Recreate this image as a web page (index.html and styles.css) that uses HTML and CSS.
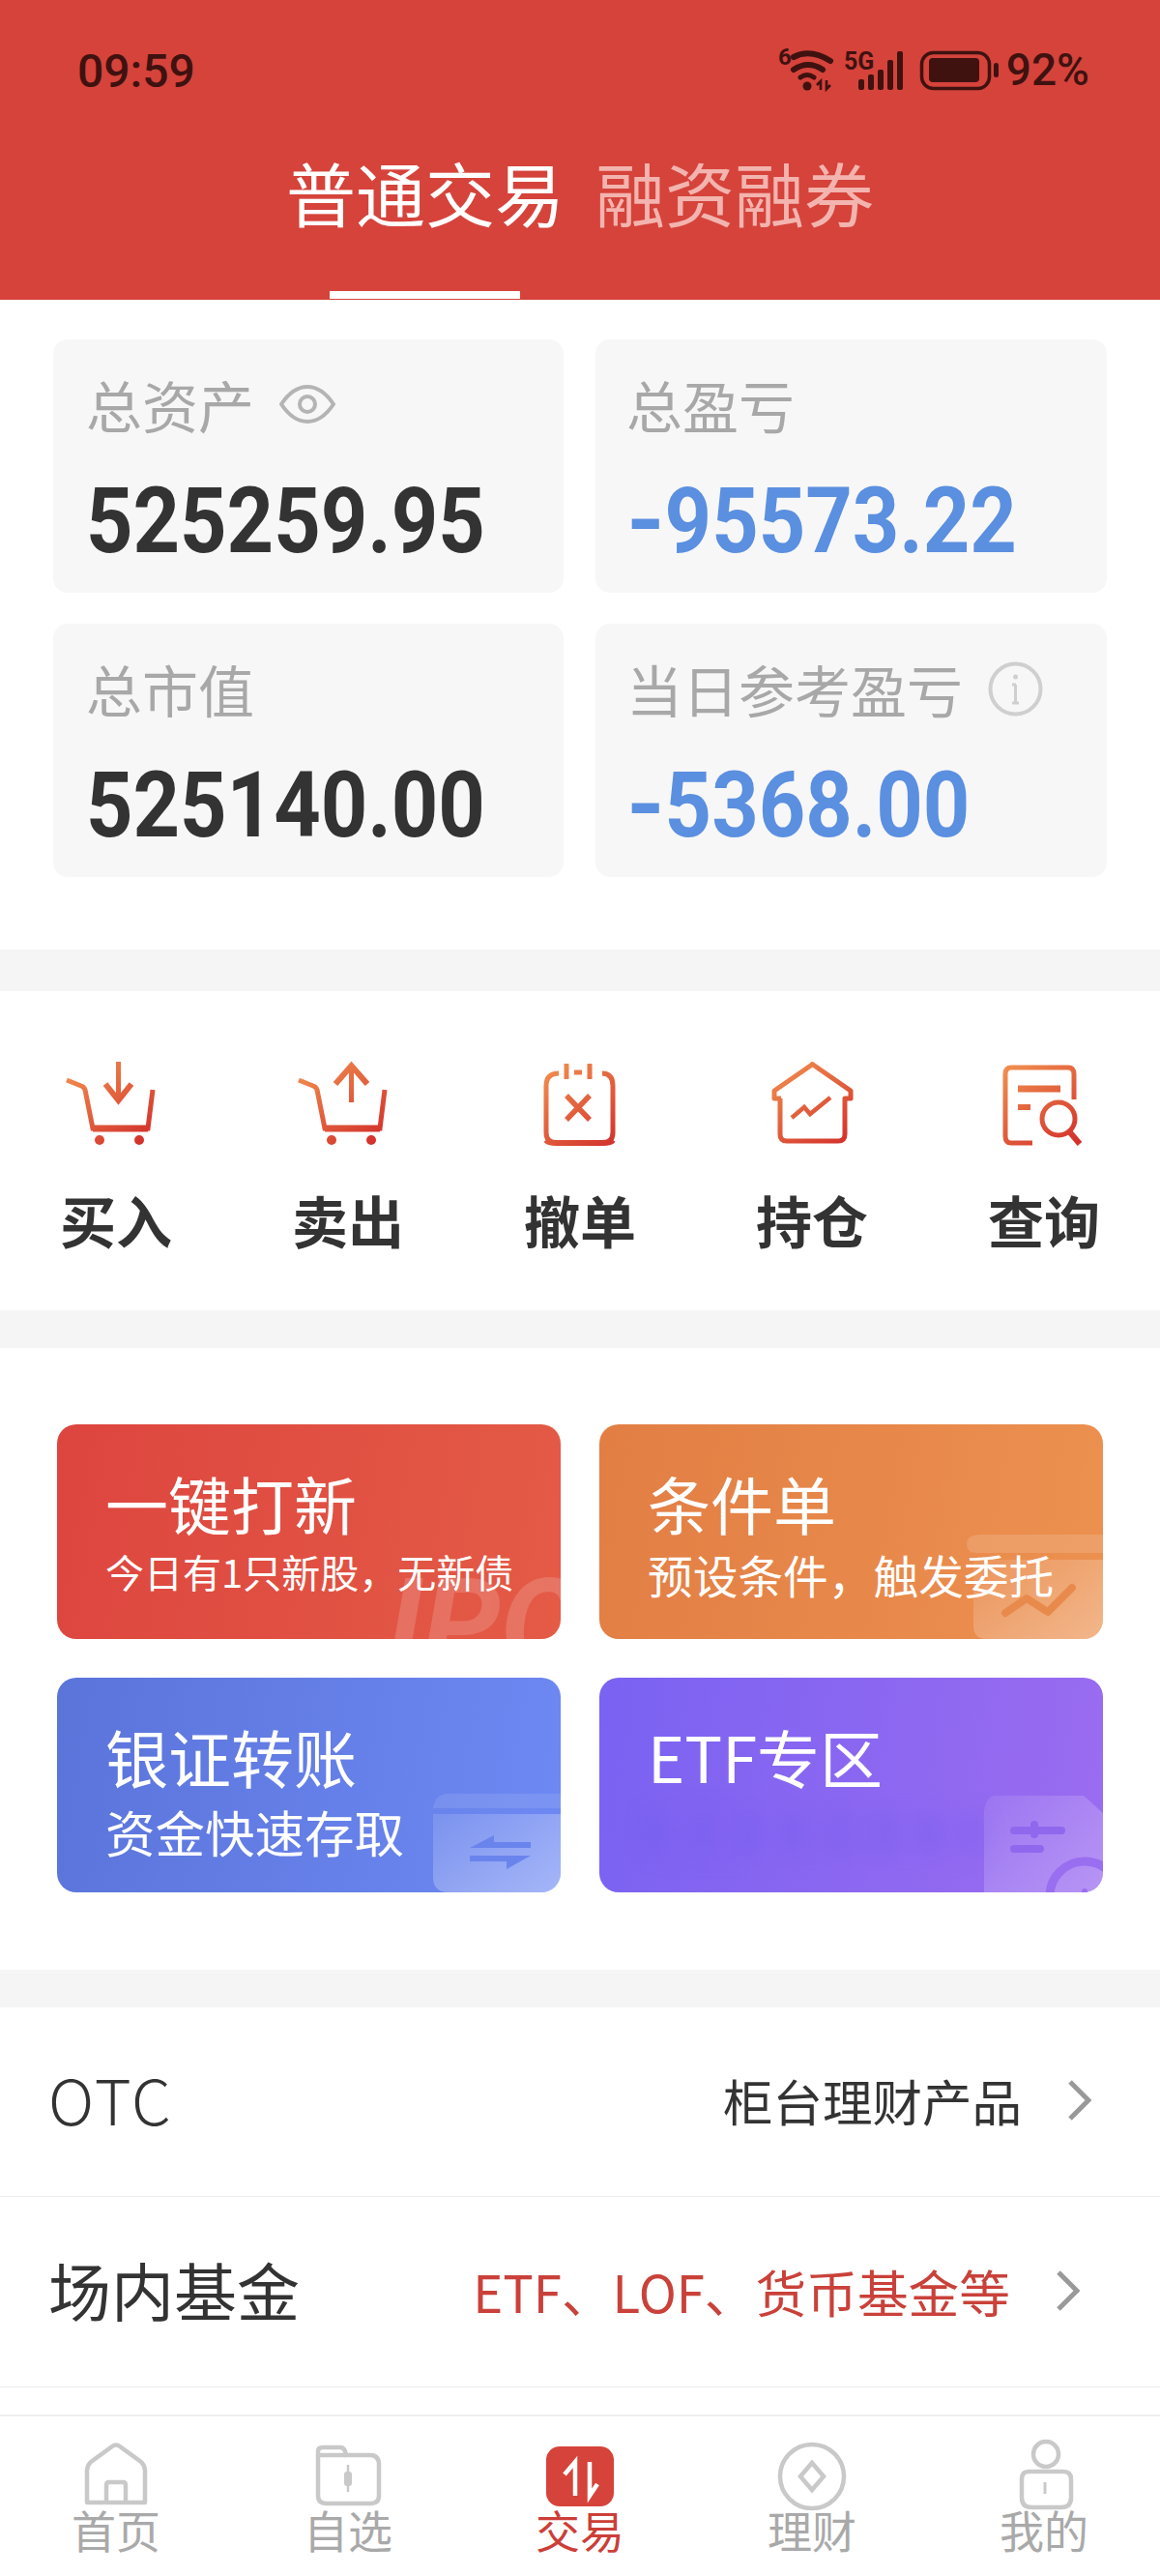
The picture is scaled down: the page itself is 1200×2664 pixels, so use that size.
FILE: index.html
```html
<!DOCTYPE html>
<html lang="zh-CN">
<head>
<meta charset="utf-8">
<title>交易</title>
<link rel="stylesheet" href="styles.css">
</head>
<body>
<div class="page">
  <header class="header">
    <div class="status">
      <span class="time">09:59</span>
      <div class="status-right">
        <svg class="status-icons" width="260" height="80" viewBox="0 0 260 80">
          <text class="st-small" x="27" y="37">6</text>
          <g fill="none" stroke="#3f1210" stroke-linecap="round">
            <path d="M43 29 Q60 20 81 33" stroke-width="6"/>
            <path d="M43 42 Q58 32 73 42" stroke-width="6"/>
            <path d="M50 50 Q57 45 64 50" stroke-width="5"/>
          </g>
          <circle cx="57" cy="59" r="4.500" fill="#3f1210"/>
          <path d="M71 63V54L67 58M77 53V62L81 58" fill="none" stroke="#3f1210" stroke-width="2.600"/>
          <text class="st-five" x="95" y="41.500">5G</text>
          <g fill="#3f1210">
            <rect x="110" y="52" width="6" height="11" rx="2"/>
            <rect x="120" y="47" width="6" height="16" rx="2"/>
            <rect x="130" y="42" width="6" height="21" rx="2"/>
            <rect x="140" y="32" width="6" height="31" rx="2"/>
            <rect x="150" y="23" width="6" height="40" rx="2"/>
          </g>
          <rect x="175.500" y="24.500" width="70" height="37" rx="12" fill="none" stroke="#3f1210" stroke-width="3.500"/>
          <rect x="183" y="30" width="52" height="25" rx="4" fill="#3f1210"/>
          <rect x="250" y="35" width="5" height="15" rx="2.500" fill="#3f1210"/>
        </svg>
        <span class="battery">92%</span>
      </div>
    </div>
    <nav class="top-tabs">
      <div class="top-tab top-tab-on"><span>普通交易</span><i class="top-line"></i></div>
      <div class="top-tab"><span>融资融券</span></div>
    </nav>
  </header>

  <section class="assets">
    <div class="asset">
      <div class="asset-label">总资产
        <svg width="58" height="40" viewBox="0 0 58 40" fill="none" stroke="#b4b4b4" stroke-width="4"><path d="M2 20 Q14 2 29 2 Q44 2 56 20 Q44 38 29 38 Q14 38 2 20Z"/><circle cx="29" cy="20" r="8"/></svg>
      </div>
      <div class="asset-num"><span>525259.95</span></div>
    </div>
    <div class="asset">
      <div class="asset-label">总盈亏</div>
      <div class="asset-num asset-blue"><span><b class="neg">-</b>95573.22</span></div>
    </div>
    <div class="asset">
      <div class="asset-label">总市值</div>
      <div class="asset-num"><span>525140.00</span></div>
    </div>
    <div class="asset">
      <div class="asset-label">当日参考盈亏
        <svg width="57" height="57" viewBox="0 0 57 57" fill="none" stroke="#cfcfcf" stroke-width="4"><circle cx="28.500" cy="28.500" r="26"/><path d="M28.500 24V43M25 24H29M25 43H32" stroke-width="3"/><circle cx="28.500" cy="16" r="2.500" fill="#cfcfcf" stroke="none"/></svg>
      </div>
      <div class="asset-num asset-blue"><span><b class="neg">-</b>5368.00</span></div>
    </div>
  </section>

  <div class="gap gap-a"></div>

  <section class="actions">
    <div class="action">
      <svg width="100" height="96" viewBox="6 0 100 96" fill="none" stroke="url(#ig)" stroke-width="5">
        <defs><linearGradient id="ig" gradientUnits="userSpaceOnUse" x1="5" y1="5" x2="70" y2="95"><stop offset="0" stop-color="#f29350"/><stop offset="1" stop-color="#d3322c"/></linearGradient></defs>
        <path d="M5 22 L20 28 Q23 29 24 32 L32 72 H89 L94 32"/>
        <path d="M32 72H89" stroke-width="7"/>
        <path d="M58.500 3V40"/>
        <path d="M45 26 L58.500 43 L72 26" stroke-width="6"/>
        <circle cx="39" cy="84" r="5" fill="url(#ig)" stroke="none"/>
        <circle cx="80" cy="84" r="5" fill="url(#ig)" stroke="none"/>
      </svg>
      <span>买入</span>
    </div>
    <div class="action">
      <svg width="100" height="96" viewBox="6 0 100 96" fill="none" stroke="url(#ig)" stroke-width="5">
        <path d="M5 22 L20 28 Q23 29 24 32 L32 72 H89 L94 32"/>
        <path d="M32 72H89" stroke-width="7"/>
        <path d="M59.500 8V45"/>
        <path d="M43 26 L59.500 7 L76 26" stroke-width="6"/>
        <circle cx="39" cy="84" r="5" fill="url(#ig)" stroke="none"/>
        <circle cx="80" cy="84" r="5" fill="url(#ig)" stroke="none"/>
      </svg>
      <span>卖出</span>
    </div>
    <div class="action">
      <svg width="100" height="96" viewBox="-7 0 100 96" fill="none" stroke="url(#ig)" stroke-width="5">
        <path d="M21 15 Q8 15 8 28 V76 Q8 87 19 87 H66 Q77 87 77 76 V28 Q77 15 66 15"/>
        <path d="M8 84 Q10 87 19 87 H66 Q75 87 77 84" stroke-width="6"/>
        <path d="M29 5V21M53 5V21M37 14H45"/>
        <path d="M29 38 L53 63M53 38 L29 63" stroke-width="5.500"/>
      </svg>
      <span>撤单</span>
    </div>
    <div class="action">
      <svg width="100" height="96" viewBox="-3 0 100 96" fill="none" stroke="url(#ig)" stroke-width="5">
        <path d="M15 41 H8 V33 L47 6 Q47 5 48 6 L87 33 V41 H81 V78 Q81 85 74 85 H21 Q14 85 14 78 V41" stroke-linejoin="round"/>
        <path d="M26 61 L39 50 L45 57 L66 40" stroke-width="4.500"/>
      </svg>
      <span>持仓</span>
    </div>
    <div class="action">
      <svg width="100" height="96" viewBox="-2 0 100 96" fill="none" stroke="url(#ig)" stroke-width="5">
        <path d="M36 87 H14 Q8 87 8 80 V16 Q8 9 14 9 H73 Q79 9 79 16 V42"/>
        <path d="M21 31H65" stroke-width="7"/>
        <path d="M21 50H34" stroke-width="6"/>
        <circle cx="63" cy="62" r="17"/>
        <path d="M74 75 L85 88" stroke-width="6"/>
      </svg>
      <span>查询</span>
    </div>
  </section>

  <div class="gap gap-b"></div>

  <section class="promos">
    <div class="promo promo-red">
      <div class="promo-title">一键打新</div>
      <div class="promo-sub sub-s">今日有1只新股&#xFF0C;无新债</div>
      <span class="ipo">IPO</span>
    </div>
    <div class="promo promo-orange">
      <div class="promo-title">条件单</div>
      <div class="promo-sub sub-m">预设条件&#xFF0C;触发委托</div>
      <svg class="deco" width="141" height="108" viewBox="0 0 141 108">
        <path d="M14 0H141V19H10Q0 19 0 10 Q0 0 14 0Z" fill="#fff" fill-opacity=".14"/>
        <path d="M7 26H141V108H21Q7 108 7 94Z" fill="url(#dg1)"/>
        <defs><linearGradient id="dg1" x1="0" y1="0" x2="1" y2="1"><stop offset="0" stop-color="#fff" stop-opacity=".08"/><stop offset="1" stop-color="#fff" stop-opacity=".34"/></linearGradient></defs>
        <path d="M40 81 L62 66 L84 80 L109 55" fill="none" stroke="#e98a4d" stroke-width="8" stroke-linecap="round" stroke-linejoin="round"/>
      </svg>
    </div>
    <div class="promo promo-blue">
      <div class="promo-title">银证转账</div>
      <div class="promo-sub sub-l">资金快速存取</div>
      <svg class="deco" width="132" height="102" viewBox="0 0 132 102">
        <path d="M16 0H132V15H0Q2 0 16 0Z" fill="#fff" fill-opacity=".1"/>
        <path d="M0 21H132V102H16Q0 102 0 86Z" fill="url(#dg2)"/>
        <defs><linearGradient id="dg2" x1="0" y1="0" x2="1" y2="1"><stop offset="0" stop-color="#fff" stop-opacity=".12"/><stop offset="1" stop-color="#fff" stop-opacity=".38"/></linearGradient></defs>
        <path d="M38 56 L63 43 V50 H101 V56Z M38 64 H101 L76 78 V70 H38Z" fill="#6a84ed"/>
      </svg>
    </div>
    <div class="promo promo-purple">
      <div class="promo-title">ETF专区</div>
      <div class="promo-blur"></div>
      <svg class="deco" width="125" height="100" viewBox="0 0 125 100">
        <path d="M14 0H105L125 18V100H2V30Q0 0 14 0Z" fill="url(#dg3)"/>
        <defs><linearGradient id="dg3" x1="0" y1="0" x2="1" y2="1"><stop offset="0" stop-color="#fff" stop-opacity=".08"/><stop offset="1" stop-color="#fff" stop-opacity=".28"/></linearGradient></defs>
        <path d="M33 36H82M54 30V40M33 55H60" fill="none" stroke="#9068ee" stroke-width="8" stroke-linecap="round"/>
        <circle cx="106" cy="104" r="36" fill="none" stroke="#9a6ef0" stroke-width="9"/>
        <circle cx="106" cy="99" r="3" fill="#9a6ef0"/>
      </svg>
    </div>
  </section>

  <div class="gap gap-b"></div>

  <section class="rows">
    <div class="row">
      <span class="row-name row-latin">OTC</span>
      <span class="row-note">柜台理财产品</span>
      <svg class="chev" width="25" height="42" viewBox="0 0 25 42" fill="none" stroke="#999" stroke-width="5"><path d="M3 2 L22 21 L3 40"/></svg>
    </div>
    <div class="row row-red">
      <span class="row-name">场内基金</span>
      <span class="row-note">ETF、LOF、货币基金等</span>
      <svg class="chev" width="25" height="42" viewBox="0 0 25 42" fill="none" stroke="#999" stroke-width="5"><path d="M3 2 L22 21 L3 40"/></svg>
    </div>
    <div class="row-cut"></div>
  </section>

  <nav class="tabbar">
    <div class="tab">
      <svg width="80" height="76" viewBox="0 0 80 76" fill="none" stroke="#c9c9c9" stroke-width="4.500">
        <path d="M10 65 V32 Q10 27 14 23 L36 7 Q40 4 44 7 L66 23 Q70 27 70 32 V65Z" stroke-linejoin="round"/>
        <path d="M30 65 V47 Q30 44 33 44 H47 Q50 44 50 47 V65"/>
      </svg>
      <span>首页</span>
    </div>
    <div class="tab">
      <svg width="80" height="76" viewBox="0 0 80 76" fill="none" stroke="#c9c9c9" stroke-width="4.500">
        <path d="M9 12 Q9 8 14 8 H32 Q37 8 38 16 H63 Q72 16 72 26 V58 Q72 66 63 66 H18 Q9 66 9 58Z"/>
        <path d="M9 16H38"/>
        <path d="M40 26V54" stroke-width="2.500"/>
        <rect x="36" y="33" width="8" height="15" rx="3" fill="#c9c9c9" stroke="none"/>
      </svg>
      <span>自选</span>
    </div>
    <div class="tab tab-on">
      <svg width="80" height="76" viewBox="0 0 80 76">
        <rect x="5" y="7" width="70" height="62" rx="14" fill="#d5433b"/>
        <path d="M35 58V23 L24 36M50 23V58 L58 46" fill="none" stroke="#fff" stroke-width="4.500"/>
      </svg>
      <span>交易</span>
    </div>
    <div class="tab">
      <svg width="80" height="76" viewBox="0 0 80 76" fill="none" stroke="#c9c9c9" stroke-width="4.500">
        <circle cx="40" cy="38" r="33"/>
        <path d="M40 24 L52 38 L40 52 L28 38Z"/>
      </svg>
      <span>理财</span>
    </div>
    <div class="tab">
      <svg width="80" height="76" viewBox="0 0 80 76" fill="none" stroke="#c9c9c9" stroke-width="4.500">
        <circle cx="42" cy="15" r="13"/>
        <path d="M24 33 H60 Q68 33 68 41 V60 Q68 70 58 70 H27 Q17 70 17 60 V41 Q17 33 24 33Z"/>
        <path d="M41 44V56" stroke-width="3"/>
      </svg>
      <span>我的</span>
    </div>
  </nav>
</div>
</body>
</html>
```

FILE: styles.css
```css
* { box-sizing: border-box; }
html, body { margin: 0; padding: 0; background: #fff; }
body { font-family: "Noto Sans CJK SC", "Noto Sans", sans-serif; }
.page { width: 1200px; height: 2664px; display: flex; flex-direction: column; overflow: hidden; color: #333; }

.header { height: 310px; background: #d5433b; display: flex; flex-direction: column; flex: none; }
.status { height: 144px; display: flex; align-items: center; justify-content: space-between; padding: 0 73px 0 80px; color: #3f1210; }
.time { font: 500 48px/1 "Roboto", sans-serif; margin-top: 3px; }
.status-right { display: flex; align-items: center; }
.status-icons { display: block; margin-top: -4px; }
.st-small { font: 700 24px "Roboto", sans-serif; fill: #3f1210; }
.st-five { font: 700 25px "Roboto", sans-serif; fill: #3f1210; }
.battery { font: 500 46px/1 "Roboto", sans-serif; margin-left: 3px; }

.top-tabs { flex: 1; display: flex; justify-content: center; gap: 32px; }
.top-tab { display: flex; flex-direction: column; align-items: center; padding-top: 19px; font-size: 72px; line-height: 70px; color: #f3b4af; }
.top-tab-on { color: #fff; }
.top-line { display: block; width: 197px; height: 8px; background: #fff; margin-top: auto; margin-bottom: 1px; }

.assets { flex: none; display: grid; grid-template-columns: 528px 529px; grid-auto-rows: 262px; gap: 32px 33px; padding: 41px 55px 75px; }
.asset { background: #f7f7f7; border-radius: 15px; padding: 32px 0 0 34px; }
.asset:nth-child(even) { padding-left: 32px; }
.asset-label { display: flex; align-items: center; gap: 26px; height: 70px; font-size: 58px; line-height: 70px; color: #a8a8a8; }
.asset-num { margin-top: 36px; font: 700 94px/100px "Roboto", sans-serif; color: #333; }
.asset-num span { display: inline-block; transform: scaleX(.9); transform-origin: left center; }
.asset-blue { color: #5b8fe0; }
.neg { display: inline-block; width: 44px; font-weight: 700; transform: scaleX(1.2); transform-origin: left center; }

.gap { flex: none; background: #f5f5f5; }
.gap-a { height: 43px; }
.gap-b { height: 39px; }

.actions { flex: none; height: 330px; display: grid; grid-template-columns: repeat(5, 240px); padding-top: 70px; }
.action { display: flex; flex-direction: column; align-items: center; font-size: 58px; font-weight: 700; line-height: 70px; color: #333; }
.action svg { display: block; overflow: visible; margin-bottom: 35px; }

.promos { flex: none; display: grid; grid-template-columns: 521px 521px; grid-auto-rows: 222px; gap: 40px; padding: 79px 59px 80px; }
.promo { position: relative; overflow: hidden; border-radius: 20px; color: #fff; padding: 46px 0 0 50px; }
.promo-red { background: linear-gradient(100deg, #dd453f, #e45b46); }
.promo-orange { background: linear-gradient(100deg, #e27e44, #ec9150); }
.promo-blue { background: linear-gradient(100deg, #5a74da, #6e89f3); }
.promo-purple { background: linear-gradient(100deg, #7a62f2, #9b6cf0); }
.promo-title { font-size: 65px; line-height: 70px; position: relative; z-index: 1; }
.promo-sub { position: relative; z-index: 1; white-space: nowrap; line-height: 56px; }
.sub-s { font-size: 40px; margin-top: 8px; }
.sub-m { font-size: 46.700px; margin-top: 11px; }
.sub-l { font-size: 51.500px; margin-top: 15px; }
.promo-blur { width: 345px; height: 42px; margin-top: 24px; border-radius: 12px; filter: blur(12px); opacity: .55;
  background: repeating-linear-gradient(90deg, rgba(110,90,235,.7) 0 20px, rgba(135,100,245,.5) 20px 47px); }
.ipo { position: absolute; left: 342px; top: 142px; font: italic 700 128px/1 "Roboto", sans-serif; color: #fff; opacity: .16; }
.deco { position: absolute; right: 0; bottom: 0; display: block; }

.rows { flex: 1; display: flex; flex-direction: column; }
.row { flex: none; height: 196px; border-bottom: 1px solid #ececec; display: flex; align-items: center; padding: 0 71px 3px 50px; }
.row-red { height: 197px; padding-right: 83px; }
.row-name { flex: 1; font-size: 65px; line-height: 80px; font-weight: 400; color: #333; margin-bottom: 4px; }
.row-latin { font-weight: 300; letter-spacing: 2px; }
.row-note { font-size: 51.500px; line-height: 70px; color: #333; }
.row-red .row-note { color: #c9413a; font-size: 52.700px; }
.chev { display: block; margin-left: 47px; }
.row-cut { flex: 1; }

.tabbar { flex: none; height: 167px; border-top: 2px solid #eeeeee; display: grid; grid-template-columns: repeat(5, 240px); padding-top: 24px; }
.tab { display: flex; flex-direction: column; align-items: center; font-size: 46px; line-height: 50px; color: #a9a9a9; }
.tab svg { display: block; overflow: visible; margin-bottom: -9px; }
.tab-on { color: #cb3f38; }
```
